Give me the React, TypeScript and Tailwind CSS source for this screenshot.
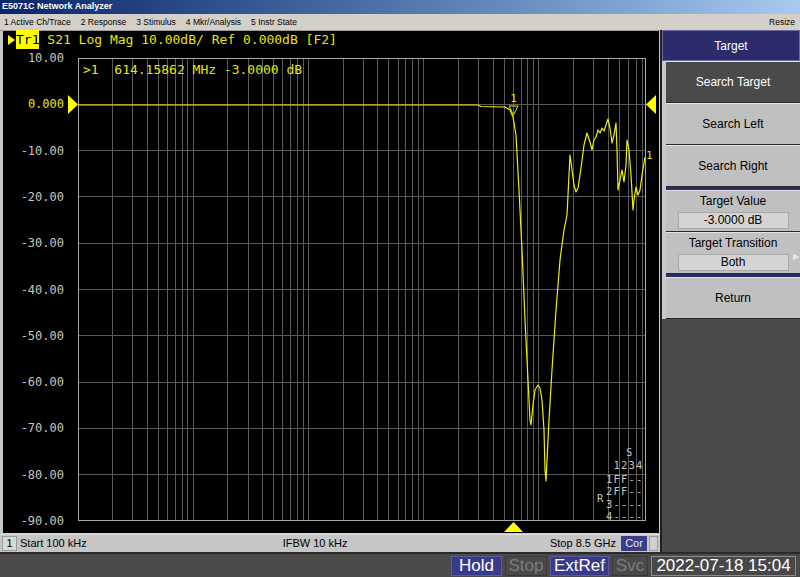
const mono = "DejaVu Sans Mono, monospace";

const xOf = (f: number) => 78 + (568 * Math.log10(f / 1e5)) / Math.log10(85000);

const gridFreqs: number[] = [];
for (let e = 5; e <= 9; e++) {
  for (let m = 1; m <= 9; m++) {
    const f = m * Math.pow(10, e);
    if (f > 1e5 && f < 8.5e9) gridFreqs.push(f);
  }
}

const yLabels = ["10.00", "0.000", "-10.00", "-20.00", "-30.00", "-40.00", "-50.00", "-60.00", "-70.00", "-80.00", "-90.00"];

const trace: [number, number][] = [
  [78, 105], [300, 105], [478, 105], [481, 106.5], [505, 107], [510, 110], [513, 117], [516, 135],
  [519, 190], [522, 250], [525, 320], [528, 380], [530, 420], [531, 425], [533, 405], [535, 390],
  [538, 385], [540, 388], [542, 400], [544, 430], [545, 470], [546, 481], [547, 460], [549, 420],
  [552, 370], [556, 310], [560, 260], [564, 230], [567, 215], [568, 195], [570, 155], [572, 170],
  [574, 185], [576, 192], [578, 188], [581, 168], [584, 145], [587, 133], [590, 142], [592, 150],
  [594, 140], [596, 137], [598, 130], [600, 133], [602, 128], [604, 131], [606, 125], [608, 119],
  [610, 128], [612, 143], [614, 135], [616, 123], [617, 150], [618, 190], [620, 180], [622, 170],
  [624, 182], [626, 165], [627, 140], [629, 150], [631, 175], [633, 210], [634, 200], [636, 187],
  [638, 195], [640, 190], [642, 175], [645, 157],
];

function Plot() {
  return (
    <svg width={656} height={485} className="block">
      <g transform="translate(-3 -48)">
        {gridFreqs.map((f) => (
          <line key={f} x1={xOf(f)} x2={xOf(f)} y1={58} y2={521} stroke="#5a5a5a" strokeWidth={1} shapeRendering="crispEdges" />
        ))}
        {Array.from({ length: 9 }, (_, i) => 58 + 46.3 * (i + 1)).map((y) => (
          <line key={y} x1={78} x2={646} y1={y} y2={y} stroke="#5a5a5a" strokeWidth={1} shapeRendering="crispEdges" />
        ))}
        <rect x={78.5} y={58.5} width={567} height={462} fill="none" stroke="#a8a8a8" strokeWidth={1} shapeRendering="crispEdges" />

        {yLabels.map((t, i) => (
          <text key={t} x={64} y={58 + 46.3 * i} textAnchor="end" dominantBaseline="central" fontFamily={mono} fontSize={12} fill={i === 1 ? "#e6e600" : "#c4c4c4"}>
            {t}
          </text>
        ))}

        <text x={83} y={69} dominantBaseline="central" fontFamily={mono} fontSize={13} fill="#e6e600" xmlSpace="preserve">
          {">1  614.15862 MHz -3.0000 dB"}
        </text>

        <polyline points={trace.map((p) => p.join(",")).join(" ")} fill="none" stroke="#f0f000" strokeWidth={1.2} strokeLinejoin="round" />

        {/* marker 1 */}
        <polygon points="509,106 518,106 513.5,115" fill="none" stroke="#e6e600" strokeWidth={1} />
        <text x={513.5} y={98} textAnchor="middle" dominantBaseline="central" fontFamily={mono} fontSize={11} fill="#e6e600">1</text>
        <text x={646} y={155} dominantBaseline="central" fontFamily={mono} fontSize={11} fill="#e6e600">1</text>

        {/* reference arrows */}
        <polygon points="68,95 78,104.5 68,114" fill="#ffff00" />
        <polygon points="656,95 646,104.5 656,114" fill="#ffff00" />
        <polygon points="504,532 513.5,522 523,532" fill="#ffff00" />

        {/* channel legend */}
        <g fontFamily={mono} fontSize={10.5} letterSpacing={1.2} fill="#c4c4c4" dominantBaseline="central">
          <text x={626} y={452}>S</text>
          <text x={613.5} y={465}>1234</text>
          <text x={606} y={478.5}>1FF--</text>
          <text x={606} y={491}>2FF--</text>
          <text x={597} y={497.5}>R</text>
          <text x={606} y={503.5}>3----</text>
          <text x={606} y={516}>4----</text>
        </g>
      </g>
    </svg>
  );
}

function SoftKey({ label, active, field, arrow }: { label: string; active?: boolean; field?: string; arrow?: boolean }) {
  return (
    <div
      className={`relative flex h-[42px] flex-col items-center justify-center border-t border-b border-t-[#e4e4e4] border-b-[#2a2a2a] ${
        active ? "bg-[#4a4a4a] text-white" : "bg-[#c0c0c0] text-black"
      }`}
    >
      <span className={field ? "leading-[15px]" : ""}>{label}</span>
      {field && (
        <div className="mt-[3px] flex h-[17px] w-[111px] items-center justify-center border border-[#a8a8a8] bg-[#d4d4d4] leading-none">
          {field}
        </div>
      )}
      {arrow && <span className="absolute right-[1px] top-[18px] text-[8px] text-[#e8e8e8]">▶</span>}
    </div>
  );
}

function StatusBox({ label, on, className }: { label: string; on?: boolean; className: string }) {
  return (
    <div
      className={`flex h-[20px] items-center justify-center border ${
        on ? "border-[#5a5aa0] bg-[#3a3a8c] text-white" : "border-[#3a3a3a] bg-[#4a4a4a] text-[#7c7c7c]"
      } ${className}`}
    >
      {label}
    </div>
  );
}

export default function App() {
  return (
    <div className="flex h-[577px] w-[800px] flex-col overflow-hidden bg-[#4a4a4a] font-['Liberation_Sans',sans-serif]">
      {/* title bar */}
      <div className="flex h-[14px] items-center bg-gradient-to-r from-[#0a246a] to-[#a6caf0] pl-[2px] text-[9px] font-bold text-white">
        E5071C Network Analyzer
      </div>
      {/* menu bar */}
      <div className="flex h-[16px] items-center bg-[#d4d0c8] pl-[4px] pr-[5px] text-[8.5px] text-black">
        <div className="flex gap-[10px]">
          <span>1 Active Ch/Trace</span>
          <span>2 Response</span>
          <span>3 Stimulus</span>
          <span>4 Mkr/Analysis</span>
          <span>5 Instr State</span>
        </div>
        <span className="ml-auto">Resize</span>
      </div>

      <div className="flex h-[522px]">
        {/* measurement window */}
        <div className="flex w-[660px] flex-col border-t border-[#9a9a9a] bg-[#c8c8c8]">
          <div className="ml-[3px] mr-[1px] flex flex-col bg-black">
            <div className="flex h-[17px] items-center pl-[5px] font-['DejaVu_Sans_Mono',monospace] text-[13px] text-[#e6e600]">
              <svg width={7} height={10} className="mr-[1px]">
                <polygon points="0,0 7,5 0,10" fill="#ffff00" />
              </svg>
              <span className="bg-[#ffff00] text-black">Tr1</span>
              <span className="whitespace-pre"> S21 Log Mag 10.00dB/ Ref 0.000dB [F2]</span>
            </div>
            <Plot />
          </div>
          <div className="mt-[1px] flex h-[18px] items-center border-t border-[#e0e0e0] bg-[#c6c6c6] text-[11px] text-black">
            <div className="ml-[2px] flex h-[15px] w-[15px] items-center justify-center border border-[#9c9c9c] bg-[#d8d8d8]">1</div>
            <span className="ml-[3px]">Start 100 kHz</span>
            <span className="ml-[196px]">IFBW 10 kHz</span>
            <span className="ml-auto">Stop 8.5 GHz</span>
            <div className="ml-[5px] flex h-[15px] w-[26px] items-center justify-center bg-[#3c3c8c] text-[#e8e8e8]">Cor</div>
            <div className="ml-[2px] mr-[2px] h-[15px] w-[9px] border border-[#9c9c9c] bg-[#d0d0d0]" />
          </div>
        </div>

        {/* softkey panel */}
        <div className="flex w-[140px] flex-col border-l-2 border-[#202020] bg-[#4a4a4a] text-[12px]">
          <div className="flex h-[31px] items-center justify-center border border-[#6a6aa0] bg-[#2c2c6c] text-white">Target</div>
          <div className="flex flex-col border-l-4 border-[#c8c8c8] bg-[#c0c0c0]">
            <SoftKey label="Search Target" active />
            <SoftKey label="Search Left" />
            <SoftKey label="Search Right" />
            <div className="h-[3px] bg-[#2c2c6c]" />
            <SoftKey label="Target Value" field="-3.0000 dB" />
            <SoftKey label="Target Transition" field="Both" arrow />
            <div className="h-[3px] bg-[#2c2c6c]" />
            <SoftKey label="Return" />
          </div>
        </div>
      </div>

      {/* instrument status bar */}
      <div className="flex h-[25px] items-center border-t-2 border-[#2a2a2a] text-[17px]">
        <div className="ml-auto flex items-center gap-[3px] pr-[4px]">
          <StatusBox label="Hold" on className="w-[51px]" />
          <StatusBox label="Stop" className="w-[42px]" />
          <StatusBox label="ExtRef" on className="w-[59px]" />
          <StatusBox label="Svc" className="w-[36px]" />
          <div className="flex h-[20px] w-[145px] items-center justify-center border border-[#8c8c8c] bg-[#484848] text-white">
            2022-07-18 15:04
          </div>
        </div>
      </div>
    </div>
  );
}
